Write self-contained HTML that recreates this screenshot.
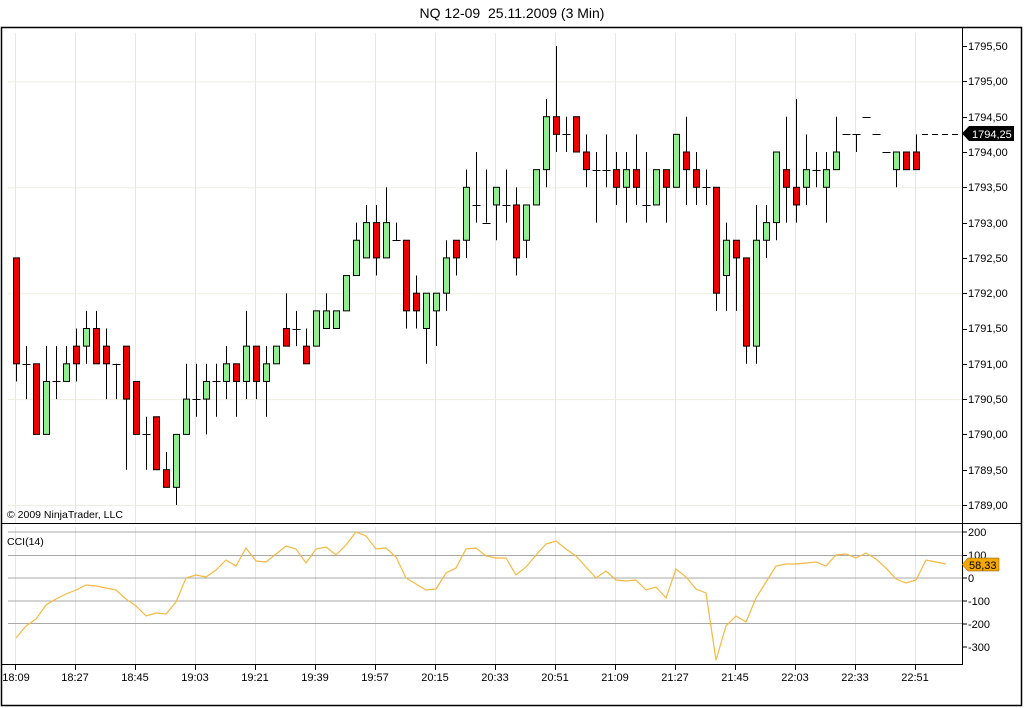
<!DOCTYPE html>
<html><head><meta charset="utf-8"><style>
html,body{margin:0;padding:0;background:#fff;width:1024px;height:708px;overflow:hidden}
svg{display:block}
text{font-family:"Liberation Sans",sans-serif;fill:#000}
</style></head><body>
<svg id="s" width="1024" height="708" xmlns="http://www.w3.org/2000/svg">
<rect x="0" y="0" width="1024" height="708" fill="#fff"/>
<text x="512" y="18" font-size="14" text-anchor="middle">NQ 12-09&#160; 25.11.2009 (3 Min)</text>
<g id="grid"></g>
<g id="cci"></g>
<g id="bars"></g>
<rect x="1.5" y="27.5" width="1020" height="678" fill="none" stroke="#000" stroke-width="1.5"/>
<line x1="962.5" y1="27" x2="962.5" y2="665" stroke="#000"/>
<line x1="1" y1="523.5" x2="1022" y2="523.5" stroke="#000"/>
<line x1="1" y1="664.5" x2="962" y2="664.5" stroke="#000"/>
<g id="ticks"></g>
<g font-size="11">
<text x="968" y="50">1795,50</text>
<text x="968" y="85">1795,00</text>
<text x="968" y="121">1794,50</text>
<text x="968" y="156">1794,00</text>
<text x="968" y="191">1793,50</text>
<text x="968" y="227">1793,00</text>
<text x="968" y="262">1792,50</text>
<text x="968" y="297">1792,00</text>
<text x="968" y="332">1791,50</text>
<text x="968" y="368">1791,00</text>
<text x="968" y="403">1790,50</text>
<text x="968" y="438">1790,00</text>
<text x="968" y="474">1789,50</text>
<text x="968" y="509">1789,00</text>
<text x="968" y="536">200</text>
<text x="968" y="582">0</text>
<text x="968" y="605">-100</text>
<text x="968" y="628">-200</text>
<text x="968" y="651">-300</text>
<text x="968" y="559">100</text>
</g>
<polygon points="962,133.5 969,126 1014,126 1014,141 969,141" fill="#000"/>
<text x="972" y="138" font-size="11" style="fill:#fff">1794,25</text>
<polygon points="962,564.5 968,558 999,558 999,571 968,571" fill="#f5a800" stroke="#7a5000" stroke-width="0.5"/>
<text x="969" y="569" font-size="11">58,33</text>
<text x="7" y="518" font-size="10.5">© 2009 NinjaTrader, LLC</text>
<text x="7" y="545" font-size="10.5">CCI(14)</text>
<g font-size="11" text-anchor="middle">
<text x="16" y="681">18:09</text><text x="75" y="681">18:27</text><text x="135" y="681">18:45</text>
<text x="195" y="681">19:03</text><text x="255" y="681">19:21</text><text x="315" y="681">19:39</text>
<text x="375" y="681">19:57</text><text x="435" y="681">20:15</text><text x="495" y="681">20:33</text>
<text x="555" y="681">20:51</text><text x="615" y="681">21:09</text><text x="675" y="681">21:27</text>
<text x="735" y="681">21:45</text><text x="795" y="681">22:03</text><text x="855" y="681">22:33</text>
<text x="915" y="681">22:51</text>
</g>
</svg>
<script>
var NS="http://www.w3.org/2000/svg";
function el(p,t,a){var e=document.createElementNS(NS,t);for(var k in a)e.setAttribute(k,a[k]);p.appendChild(e);return e;}
var g=document.getElementById('grid'),b=document.getElementById('bars'),c=document.getElementById('cci'),tk=document.getElementById('ticks');
function Y(t){return 505-17.65*t;}
for(var x=15.5;x<962;x+=60){el(g,'line',{x1:x,y1:33,x2:x,y2:523,stroke:'#e6e6e6'});el(g,'line',{x1:x,y1:527,x2:x,y2:664,stroke:'#e6e6e6'});el(tk,'line',{x1:x,y1:664,x2:x,y2:670,stroke:'#000'});}
[24,18,12,6,0].forEach(function(t){el(g,'line',{x1:8,y1:Y(t)+.5,x2:962,y2:Y(t)+.5,stroke:'#efede0'});});
[532,555.5,578,601,623.5].forEach(function(y){el(g,'line',{x1:8,y1:y,x2:962,y2:y,stroke:'#a8a8a8'});});
for(var t=0;t<=26;t+=2){var y=Math.round(Y(t))+.5;el(tk,'line',{x1:962,y1:y,x2:967,y2:y,stroke:'#000'});}
[532,555.5,578,601,624,647].forEach(function(y){el(tk,'line',{x1:962,y1:y,x2:967,y2:y,stroke:'#000'});});
var D=[[14,8,14,7],[8,8,9,6],[8,4,8,4],[4,7,9,4],[7,7,9,6],[7,8,9,7],[9,8,10,7],[9,10,11,8],[10,8,11,8],[9,8,10,6],[8,8,8,6],[9,6,9,2],[7,4,7,4],[4,4,5,2],[5,2,5,2],[2,1,3,1],[1,4,4,0],[4,6,8,4],[6,6,8,5],[6,7,8,4],[7,7,8,5],[7,8,9,6],[8,7,8,5],[7,9,11,6],[9,7,9,6],[7,8,9,5],[8,9,9,8],[10,9,12,9],[10,10,11,9],[9,8,10,8],[9,11,11,9],[10,11,12,10],[10,11,11,10],[11,13,13,11],[13,15,16,13],[14,16,17,14],[16,14,17,13],[14,16,18,14],[15,15,16,15],[15,11,15,10],[12,11,13,10],[10,12,12,8],[11,12,12,9],[12,14,15,11],[15,14,15,13],[15,18,19,14],[17,17,20,16],[16,16,19,16],[17,18,18,15],[17,17,19,16],[17,14,18,13],[15,17,17,14],[17,19,19,17],[19,22,23,18],[22,21,26,20],[21,21,22,20],[22,20,22,20],[20,19,21,18],[19,19,20,16],[19,19,21,18],[19,18,20,17],[18,19,20,16],[19,18,21,17],[17,17,20,16],[17,19,19,17],[19,18,19,16],[18,21,21,18],[20,19,22,17],[19,18,20,17],[18,18,19,17],[18,12,18,11],[13,15,16,11],[15,14,15,11],[14,9,14,8],[9,15,17,8],[15,16,17,14],[16,20,20,15],[19,18,22,16],[18,17,23,16],[18,19,21,17],[19,19,20,18],[18,19,20,16],[19,20,22,19],[21,21,21,21],[21,21,21,20],[22,22,22,22],[21,21,21,21],[20,20,20,20],[19,20,20,18],[20,19,20,19],[20,19,21,19]];
D.forEach(function(d,i){var x=Math.round(16+10*i)+.5;var o=d[0],cl=d[1],h=d[2],l=d[3];
 if(h!=l)el(b,'line',{x1:x,y1:Y(h),x2:x,y2:Y(l),stroke:'#000'});
 if(o==cl){el(b,'line',{x1:x-4,y1:Math.round(Y(o))+.5,x2:x+4,y2:Math.round(Y(o))+.5,stroke:'#000'});}
 else{var top=Y(Math.max(o,cl)),bot=Y(Math.min(o,cl));el(b,'rect',{x:x-3,y:top,width:6,height:bot-top,fill:cl>o?'#90ee90':'#ee0000',stroke:'#000','stroke-width':1});}
});
el(b,'line',{x1:922,y1:134.5,x2:961,y2:134.5,stroke:'#000','stroke-dasharray':'6,4'});
var C=[638,626,619,605,599,594,590,585,586,588,590,599,606,616,613,614,602,578,575,577,570,560,566,548,561,562,554,546,549,563,549,547,555,545,532,536,549,548,557,578,584,590,589,573,568,549,548,556,558,558,575,567,555,544,541,549,556,567,578,571,580,581,580,590,587,598,569,577,589,593,660,626,616,622,598,582,566,564,564,563,562,566,555,554,558,553,559,568,579,583,580,560,562,564];
var pts=C.map(function(y,i){return (16+10*i)+','+y;}).join(' ');
el(c,'polyline',{points:pts,fill:'none',stroke:'#f5b942','stroke-width':1.2});
</script>
</body></html>
